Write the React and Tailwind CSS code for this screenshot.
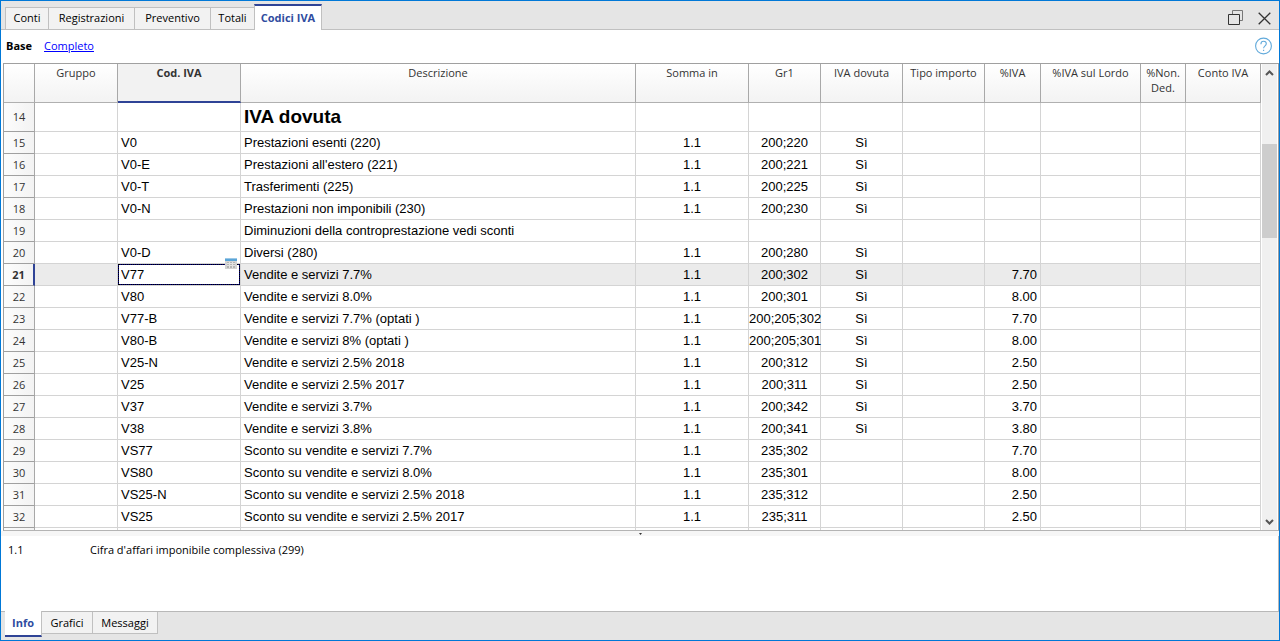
const TABS = [
  { label: "Conti", width: "w-[44px]" },
  { label: "Registrazioni", width: "w-[86px]" },
  { label: "Preventivo", width: "w-[76px]" },
  { label: "Totali", width: "w-[43px]" },
];

const COLUMNS = [
  { label: "", width: "w-[31px]" },
  { label: "Gruppo", width: "w-[83px]" },
  { label: "Cod. IVA", width: "w-[123px]" },
  { label: "Descrizione", width: "" },
  { label: "Somma in", width: "w-[113px]" },
  { label: "Gr1", width: "w-[72px]" },
  { label: "IVA dovuta", width: "w-[82px]" },
  { label: "Tipo importo", width: "w-[82px]" },
  { label: "%IVA", width: "w-[56px]" },
  { label: "%IVA sul Lordo", width: "w-[100px]" },
  { label: "%Non. Ded.", width: "w-[45px]" },
  { label: "Conto IVA", width: "w-[75px]" },
];

const ROWS = [
  { n: 14, title: "IVA dovuta" },
  { n: 15, code: "V0", desc: "Prestazioni esenti (220)", sum: "1.1", gr: "200;220", due: "Sì" },
  { n: 16, code: "V0-E", desc: "Prestazioni all'estero (221)", sum: "1.1", gr: "200;221", due: "Sì" },
  { n: 17, code: "V0-T", desc: "Trasferimenti (225)", sum: "1.1", gr: "200;225", due: "Sì" },
  { n: 18, code: "V0-N", desc: "Prestazioni non imponibili (230)", sum: "1.1", gr: "200;230", due: "Sì" },
  { n: 19, desc: "Diminuzioni della controprestazione vedi sconti" },
  { n: 20, code: "V0-D", desc: "Diversi (280)", sum: "1.1", gr: "200;280", due: "Sì" },
  { n: 21, code: "V77", desc: "Vendite e servizi 7.7%", sum: "1.1", gr: "200;302", due: "Sì", pct: "7.70", selected: true },
  { n: 22, code: "V80", desc: "Vendite e servizi 8.0%", sum: "1.1", gr: "200;301", due: "Sì", pct: "8.00" },
  { n: 23, code: "V77-B", desc: "Vendite e servizi 7.7% (optati )", sum: "1.1", gr: "200;205;302", due: "Sì", pct: "7.70" },
  { n: 24, code: "V80-B", desc: "Vendite e servizi 8% (optati )", sum: "1.1", gr: "200;205;301", due: "Sì", pct: "8.00" },
  { n: 25, code: "V25-N", desc: "Vendite e servizi 2.5% 2018", sum: "1.1", gr: "200;312", due: "Sì", pct: "2.50" },
  { n: 26, code: "V25", desc: "Vendite e servizi 2.5% 2017", sum: "1.1", gr: "200;311", due: "Sì", pct: "2.50" },
  { n: 27, code: "V37", desc: "Vendite e servizi 3.7%", sum: "1.1", gr: "200;342", due: "Sì", pct: "3.70" },
  { n: 28, code: "V38", desc: "Vendite e servizi 3.8%", sum: "1.1", gr: "200;341", due: "Sì", pct: "3.80" },
  { n: 29, code: "VS77", desc: "Sconto su vendite e servizi 7.7%", sum: "1.1", gr: "235;302", pct: "7.70" },
  { n: 30, code: "VS80", desc: "Sconto su vendite e servizi 8.0%", sum: "1.1", gr: "235;301", pct: "8.00" },
  { n: 31, code: "VS25-N", desc: "Sconto su vendite e servizi 2.5% 2018", sum: "1.1", gr: "235;312", pct: "2.50" },
  { n: 32, code: "VS25", desc: "Sconto su vendite e servizi 2.5% 2017", sum: "1.1", gr: "235;311", pct: "2.50" },
  { n: 0 },
];

function Cell({ children, className = "" }) {
  return (
    <td className={`border-r border-b border-[#d4d4d4] p-0 whitespace-nowrap ${className}`}>
      {children}
    </td>
  );
}

function PickerIcon() {
  return (
    <svg className="block" width="12" height="11" viewBox="0 0 12 11" shapeRendering="crispEdges">
      <rect width="12" height="11" fill="#d3d3d3" />
      <rect width="12" height="3" fill="#5aa5d8" />
      <rect width="12" height="1" fill="#9cc8e6" />
      <rect x="2" y="4" width="8" height="6" fill="#b4b4b4" />
      <path d="M2 5.500h8M2 7.500h8M4.500 4v6M7.500 4v6" stroke="#e2e2e2" />
    </svg>
  );
}

function TableRow({ row }) {
  return (
    <tr className={`${row.title ? "h-[29px]" : "h-[22px]"} ${row.selected ? "bg-[#ebebeb]" : ""}`}>
      <th
        scope="row"
        className={`border-b border-b-[#a0a0a0] bg-linear-to-r from-[#fcfcfc] to-[#f3f3f3] p-0 font-['Open_Sans',sans-serif] text-[11px] text-[#333] ${
          row.selected
            ? "border-r-2 border-r-[#2f4396] font-bold"
            : "border-r border-r-[#a8a8a8] font-normal"
        }`}
      >
        {row.n || ""}
      </th>
      <Cell />
      <Cell className={row.selected ? "relative" : "pl-[3px]"}>
        {row.selected ? (
          <>
            <input
              aria-label="Cod. IVA"
              defaultValue={row.code}
              className="block h-[21px] w-full border border-[#000080] bg-white px-[2px] outline-1 -outline-offset-1 outline-black outline-dotted"
            />
            <button type="button" aria-label="Scegli" className="absolute -top-[6px] right-[3px]">
              <PickerIcon />
            </button>
          </>
        ) : (
          row.code
        )}
      </Cell>
      <Cell className={row.title ? "pt-[2px] pl-[3px]" : "pl-[3px]"}>
        {row.title ? <span className="text-[19px] font-bold">{row.title}</span> : row.desc}
      </Cell>
      <Cell className="text-center">{row.sum}</Cell>
      <Cell className="text-center">{row.gr}</Cell>
      <Cell className="text-center">{row.due}</Cell>
      <Cell />
      <Cell className="pr-[3px] text-right">{row.pct}</Cell>
      <Cell />
      <Cell />
      <Cell />
    </tr>
  );
}

function Chevron({ down }) {
  return (
    <svg width="9" height="6" viewBox="0 0 9 6" fill="none" stroke="#555" strokeWidth="2">
      <path d={down ? "M1 1l3.5 3.5L8 1" : "M1 5l3.5-3.5L8 5"} />
    </svg>
  );
}

export default function App() {
  return (
    <div className="flex h-screen flex-col border border-[#0078d7] bg-white font-['Open_Sans','Noto_Sans',sans-serif] text-[11px] text-black">
      <header className="flex h-[29px] shrink-0 justify-between border-b border-[#c0c0c0] bg-[#e5e5e5] pr-2 pl-1">
        <nav className="flex items-end">
          {TABS.map((t, i) => (
            <button
              key={t.label}
              type="button"
              className={`h-[22px] border-t border-r border-[#c0c0c0] bg-[#f2f2f2] ${i === 0 ? "border-l" : ""} ${
                i === 3 ? "border-r-0" : ""
              } ${t.width}`}
            >
              {t.label}
            </button>
          ))}
          <button
            type="button"
            className="-mb-px h-[26px] w-[68px] border-x border-t-2 border-x-[#c0c0c0] border-t-[#2f4396] bg-white font-bold text-[#2f4ca0]"
          >
            Codici IVA
          </button>
        </nav>
        <div className="flex items-center gap-[14px] pt-[6px]">
          <button type="button" aria-label="Ripristina">
            <svg className="block" width="16" height="16" viewBox="0 0 16 16" fill="none">
              <path d="M4.500 4V.5h10v10H12" stroke="#777" />
              <path d="M.5 4.500h11v10H.5z" stroke="#333" />
            </svg>
          </button>
          <button type="button" aria-label="Chiudi">
            <svg className="block" width="13" height="13" viewBox="0 0 13 13" stroke="#333" strokeWidth="1.3">
              <path d="M.7.7l11.600 11.600M12.300.7L.7 12.300" />
            </svg>
          </button>
        </div>
      </header>

      <div className="flex h-[33px] shrink-0 items-center gap-3 pr-[6px] pl-[5px]">
        <b>Base</b>
        <a href="#completo" className="text-[#0000ff] underline">
          Completo
        </a>
        <button type="button" aria-label="Aiuto" className="ml-auto pb-[2px]">
          <svg className="block" width="18" height="18" viewBox="0 0 18 18" fill="none" stroke="#62aadb" strokeWidth="1.1">
            <circle cx="8.500" cy="9" r="7.900" />
            <path d="M5.900 7.200c0-1.900 1.100-2.900 2.700-2.900s2.700 1 2.700 2.500c0 2-2.700 2.200-2.700 4.500M8.600 12.700v1.300" />
          </svg>
        </button>
      </div>

      <main className="ml-[2px] flex min-h-0 flex-1 border border-[#a0a0a0] border-b-[#b4b4b4]">
        <div className="min-w-0 flex-1 overflow-hidden">
          <table className="w-full table-fixed border-separate border-spacing-0 font-['Liberation_Sans',Arial,sans-serif] text-[13px] leading-[20px]">
            <thead>
              <tr className="h-[39px] font-['Open_Sans',sans-serif] text-[11px] leading-[15px] text-[#333]">
                {COLUMNS.map((c, i) => (
                  <th
                    key={i}
                    scope="col"
                    className={`border-r border-r-[#a8a8a8] p-0 pt-px align-top ${c.width} ${
                      i === 2
                        ? "border-b-2 border-b-[#2f4396] bg-[#f2f2f2] font-bold"
                        : "border-b border-b-[#b0b0b0] bg-linear-to-b from-white to-[#f3f3f3] font-normal"
                    }`}
                  >
                    {c.label}
                  </th>
                ))}
              </tr>
            </thead>
            <tbody>
              {ROWS.map((r) => (
                <TableRow key={r.n} row={r} />
              ))}
            </tbody>
          </table>
        </div>
        <div className="mr-px ml-px flex w-[15px] shrink-0 flex-col bg-[#f0f0f0]">
          <button type="button" aria-label="Scorri su" className="flex h-[17px] items-center justify-center">
            <Chevron />
          </button>
          <div className="flex flex-1 flex-col pt-[63px]">
            <div className="h-[94px] bg-[#cdcdcd]" />
          </div>
          <button type="button" aria-label="Scorri giù" className="flex h-[17px] items-center justify-center">
            <Chevron down />
          </button>
        </div>
      </main>

      <div className="flex h-[5px] shrink-0 items-center justify-center bg-[#f6f6f6]">
        <svg width="3" height="2" viewBox="0 0 3 2" fill="#333">
          <path d="M0 0h3L1.500 2z" />
        </svg>
      </div>

      <section className="flex h-[76px] shrink-0 border-r border-b border-[#b8b8b8] pt-[6px] pl-[7px] leading-[16px]">
        <span className="w-[82px]">1.1</span>
        <span>Cifra d'affari imponibile complessiva (299)</span>
      </section>

      <footer className="flex h-[28px] shrink-0 items-start bg-[#e5e5e5] pl-1">
        <button
          type="button"
          className="-mt-px h-[26px] w-[37px] border-r border-b-2 border-r-[#c0c0c0] border-b-[#2f4396] bg-white font-bold text-[#2f4ca0]"
        >
          Info
        </button>
        <button type="button" className="h-[22px] w-[51px] border-r border-b border-[#c0c0c0] bg-[#f2f2f2] pt-px">
          Grafici
        </button>
        <button type="button" className="h-[22px] w-[65px] border-r border-b border-[#c0c0c0] bg-[#f2f2f2] pt-px">
          Messaggi
        </button>
      </footer>
    </div>
  );
}
